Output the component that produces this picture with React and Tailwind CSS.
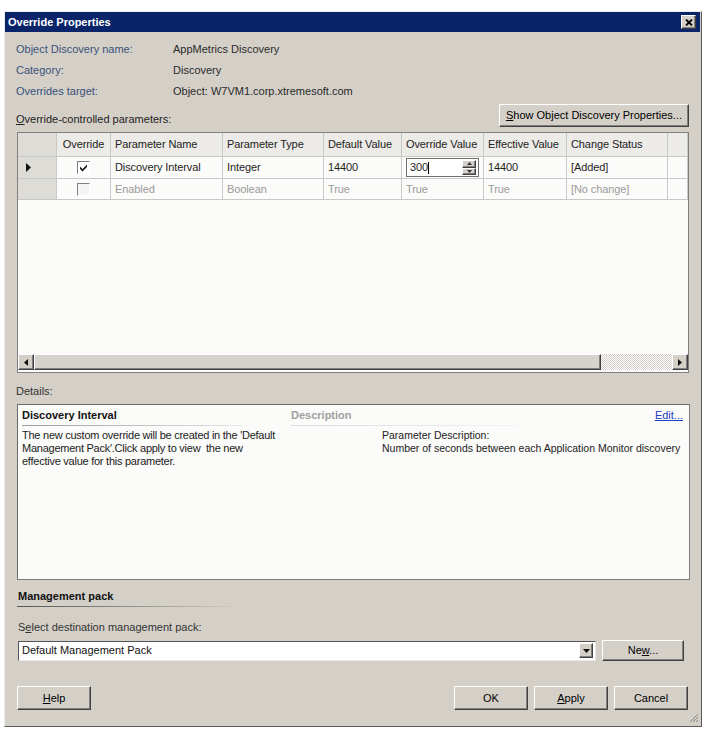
import React from "react";

const raised =
  "border border-t-white border-l-white border-r-[#404040] border-b-[#404040] shadow-[inset_-1px_-1px_0_#808080] bg-[#d4d0c8]";

function Button({ className = "", children }) {
  return (
    <div
      className={`${raised} flex items-center justify-center text-[11px] text-black ${className}`}
    >
      {children}
    </div>
  );
}

function Check({ checked, disabled }) {
  return (
    <div
      className={`w-[13px] h-[13px] border border-t-[#808080] border-l-[#808080] border-r-white border-b-white flex items-center justify-center ${
        disabled ? "bg-[#f4f4f4]" : "bg-white"
      }`}
    >
      {checked && (
        <svg width="9" height="9" viewBox="0 0 9 9">
          <path d="M1 3.5 L3.5 6 L8 1.5 L8 4 L3.5 8.5 L1 6 Z" fill="#202020" />
        </svg>
      )}
    </div>
  );
}

const cols =
  "grid grid-cols-[39px_54px_112px_101px_78px_82px_83px_101px_20px]";

function Cell({ className = "", children }) {
  return (
    <div
      className={`border-r border-b border-[#c8c8c8] px-[4px] flex items-center whitespace-nowrap overflow-hidden ${className}`}
    >
      {children}
    </div>
  );
}

function ParamGrid() {
  const head = [
    "Override",
    "Parameter Name",
    "Parameter Type",
    "Default Value",
    "Override Value",
    "Effective Value",
    "Change Status",
  ];
  return (
    <div className="ml-[1px] mt-[5px] mr-[12px] h-[241px] border border-[#808080] bg-[#fbfbf9] flex flex-col tracking-[-0.1px]">
      <div className={`${cols} h-[24px] bg-[#ecebe7] text-[#222]`}>
        <Cell className="bg-[#dedcd6]" />
        {head.map((h, i) => (
          <Cell key={h} className={i === 0 ? "justify-center" : ""}>
            <span>{h}</span>
            {i === 1 && (
              <svg width="7" height="5" viewBox="0 0 7 5" className="ml-[22px]">
                <path d="M3.5 0 L7 5 L0 5 Z" fill="#c4c4c4" />
              </svg>
            )}
          </Cell>
        ))}
        <Cell />
      </div>
      <div className={`${cols} h-[22px] text-[#1e1e1e]`}>
        <Cell className="bg-[#dedcd6]">
          <svg width="5" height="9" viewBox="0 0 5 9" className="ml-[4px]">
            <path d="M0 0 L5 4.5 L0 9 Z" fill="#111" />
          </svg>
        </Cell>
        <Cell className="justify-center">
          <Check checked />
        </Cell>
        <Cell>Discovery Interval</Cell>
        <Cell>Integer</Cell>
        <Cell>14400</Cell>
        <Cell className="px-[1px]">
          <div className="w-[78px] h-[19px] border border-[#6f6f6f] bg-white flex items-center">
            <span className="pl-[3px]">300</span>
            <span className="w-px h-[12px] bg-black" />
            <div className="ml-auto mr-[2px] w-[14px] h-[15px] flex flex-col">
              <div className={`${raised} flex-1 flex items-center justify-center`}>
                <svg width="5" height="3" viewBox="0 0 5 3">
                  <path d="M2.5 0 L5 3 L0 3 Z" fill="#333" />
                </svg>
              </div>
              <div className={`${raised} flex-1 flex items-center justify-center`}>
                <svg width="5" height="3" viewBox="0 0 5 3">
                  <path d="M0 0 L5 0 L2.5 3 Z" fill="#333" />
                </svg>
              </div>
            </div>
          </div>
        </Cell>
        <Cell>14400</Cell>
        <Cell>[Added]</Cell>
        <Cell />
      </div>
      <div className={`${cols} h-[21px] text-[#9a9a9a]`}>
        <Cell className="bg-[#dedcd6]" />
        <Cell className="justify-center">
          <Check disabled />
        </Cell>
        <Cell>Enabled</Cell>
        <Cell>Boolean</Cell>
        <Cell>True</Cell>
        <Cell>True</Cell>
        <Cell>True</Cell>
        <Cell>[No change]</Cell>
        <Cell />
      </div>
      <div className="flex-1" />
      <div className="h-[16px] mb-[2px] flex bg-[#eeede9]">
        <div className={`${raised} w-[16px] flex items-center justify-center`}>
          <svg width="4" height="7" viewBox="0 0 4 7">
            <path d="M4 0 L0 3.5 L4 7 Z" fill="#111" />
          </svg>
        </div>
        <div className={`${raised} w-[567px] bg-[#d6d3cd]`} />
        <div className="flex-1 bg-[repeating-conic-gradient(#d4d0c8_0%_25%,#ffffff_0%_50%)] bg-[length:2px_2px]" />
        <div className={`${raised} w-[16px] flex items-center justify-center`}>
          <svg width="4" height="7" viewBox="0 0 4 7">
            <path d="M0 0 L4 3.5 L0 7 Z" fill="#111" />
          </svg>
        </div>
      </div>
    </div>
  );
}

export default function App() {
  return (
    <div className="w-[710px] h-[735px] bg-white pt-[11px] pl-[4px] font-['Liberation_Sans',Arial,sans-serif] text-[11px] text-[#222]">
      <div className="w-[698px] h-[716px] bg-[#d4d0c8] border border-t-[#ececec] border-l-[#ececec] border-r-[#5a5a5a] border-b-[#5a5a5a] flex flex-col">
        {/* title bar */}
        <div className="h-[20px] mr-[1px] bg-[#0a246a] flex items-center">
          <span className="pl-[3px] text-white font-bold text-[11px]">
            Override Properties
          </span>
          <div
            className={`${raised} ml-auto mr-[4px] w-[15px] h-[14px] flex items-center justify-center`}
          >
            <svg width="8" height="7" viewBox="0 0 8 7">
              <path
                d="M1 0.5 L7 6.5 M7 0.5 L1 6.5"
                stroke="#000"
                strokeWidth="1.8"
              />
            </svg>
          </div>
        </div>

        <div className="pl-[11px] flex flex-col">
          {/* info rows */}
          <div className="mt-[7px]">
            {[
              ["Object Discovery name:", "AppMetrics Discovery"],
              ["Category:", "Discovery"],
              ["Overrides target:", "Object: W7VM1.corp.xtremesoft.com"],
            ].map(([k, v]) => (
              <div key={k} className="flex h-[21px] items-center">
                <span className="w-[157px] text-[#3a5079]">{k}</span>
                <span className="text-[#2a2a2a]">{v}</span>
              </div>
            ))}
          </div>

          <div className="mt-[2px] mr-[12px] flex items-end justify-between">
            <span className="leading-[13px] mb-[1px]">
              <u>O</u>verride-controlled parameters:
            </span>
            <Button className="w-[190px] h-[23px]">
              <span>
                <u>S</u>how Object Discovery Properties...
              </span>
            </Button>
          </div>

          <ParamGrid />

          <div className="mt-[12px] leading-[13px] text-[#333]">Details:</div>

          {/* details box */}
          <div className="mt-[6px] ml-[1px] mr-[11px] h-[176px] bg-[#fbfbf9] border border-t-[#6a6a6a] border-l-[#6a6a6a] border-r-[#7a7a7a] border-b-[#7a7a7a] flex">
            <div className="w-[273px] pl-[4px] pt-[3px]">
              <div className="font-bold text-[#111] leading-[14px]">
                Discovery Interval
              </div>
              <div className="mt-[3px] h-px w-[220px] bg-gradient-to-r from-[#9a9a9a] to-[#e6e6e6]" />
              <div className="mt-[3px] leading-[13px] text-[#222] tracking-[-0.25px] whitespace-nowrap">
                The new custom override will be created in the 'Default
                <br />
                Management Pack'.Click apply to view&nbsp; the new
                <br />
                effective value for this parameter.
              </div>
            </div>
            <div className="flex-1 pt-[3px] pr-[6px]">
              <div className="flex leading-[14px]">
                <span className="font-bold text-[#a0a0a0]">Description</span>
                <span className="ml-auto text-[#1a3fc4] underline">Edit...</span>
              </div>
              <div className="mt-[3px] h-px w-[226px] bg-gradient-to-r from-[#dcdcdc] to-[#f2f2f2]" />
              <div className="mt-[3px] pl-[91px] leading-[13px] text-[#222] text-[10.5px] whitespace-nowrap">
                Parameter Description:
                <br />
                Number of seconds between each Application Monitor discovery
              </div>
            </div>
          </div>

          {/* management pack */}
          <div className="mt-[9px] ml-[2px] font-bold text-[#111] leading-[14px]">
            Management pack
          </div>
          <div className="mt-[3px] ml-[1px] h-px w-[224px] bg-gradient-to-r from-[#555] to-[#d4d0c8]" />
          <div className="mt-[14px] ml-[2px] leading-[13px] text-[#333]">
            S<u>e</u>lect destination management pack:
          </div>
          <div className="mt-[6px] ml-[2px] flex items-center">
            <div className="w-[578px] h-[20px] bg-white border border-t-[#555] border-l-[#555] border-r-[#e8e8e8] border-b-[#e8e8e8] flex items-center">
              <span className="pl-[3px] text-[#111]">Default Management Pack</span>
              <div
                className={`${raised} ml-auto mr-[2px] w-[14px] h-[15px] flex items-center justify-center`}
              >
                <svg width="7" height="4" viewBox="0 0 7 4">
                  <path d="M0 0 L7 0 L3.5 4 Z" fill="#111" />
                </svg>
              </div>
            </div>
            <Button className="ml-[6px] w-[82px] h-[21px]">
              <span>
                Ne<u>w</u>...
              </span>
            </Button>
          </div>

          {/* bottom buttons */}
          <div className="mt-[25px] ml-[1px] flex">
            <Button className="w-[74px] h-[24px]">
              <span>
                <u>H</u>elp
              </span>
            </Button>
            <Button className="ml-auto w-[74px] h-[24px]">OK</Button>
            <Button className="ml-[6px] w-[74px] h-[24px]">
              <span>
                <u>A</u>pply
              </span>
            </Button>
            <Button className="ml-[6px] mr-[13px] w-[74px] h-[24px]">
              Cancel
            </Button>
          </div>
        </div>

        <div className="mt-auto mb-[3px] mr-[2px] self-end">
          <svg width="11" height="11" viewBox="0 0 11 11">
            <path
              d="M10 2 L2 10 M10 5 L5 10 M10 8 L8 10"
              stroke="#888"
              strokeWidth="1"
            />
          </svg>
        </div>
      </div>
    </div>
  );
}
